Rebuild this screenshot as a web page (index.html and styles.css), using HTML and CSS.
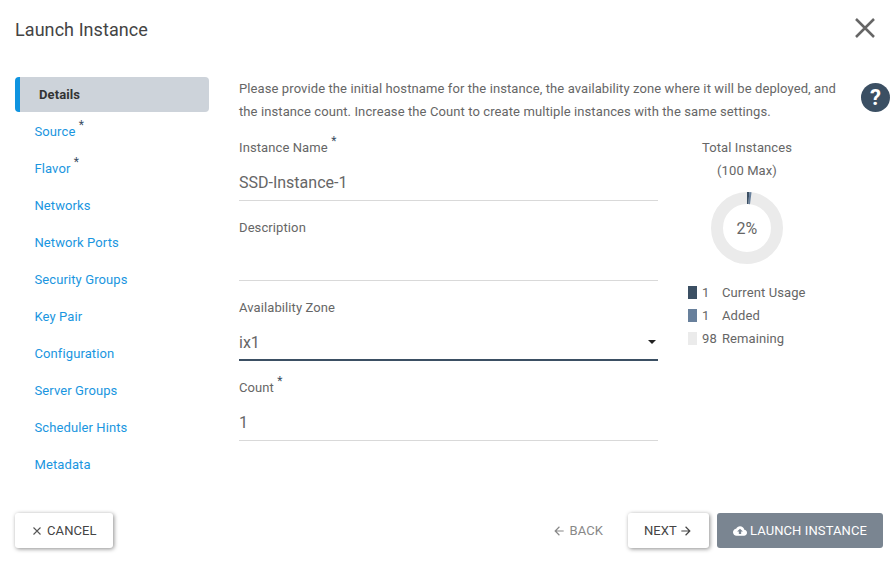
FILE: index.html
```html
<!DOCTYPE html>
<html lang="en">
<head>
  <meta charset="UTF-8" />
  <title>Launch Instance</title>
  <link rel="stylesheet" href="styles.css">
</head>
<body>
  <div class="dialog">
    <header class="dialog-header">
      <h1>Launch Instance</h1>
      <button class="close" aria-label="Close">
        <svg width="20" height="20" viewBox="0 0 20 20"><path d="M1 1L19 19M19 1L1 19" stroke="#666" stroke-width="2.5" fill="none"/></svg>
      </button>
    </header>

    <div class="dialog-body">
      <nav class="steps">
        <a class="step active">Details</a>
        <a class="step">Source <sup class="req">*</sup></a>
        <a class="step">Flavor <sup class="req">*</sup></a>
        <a class="step">Networks</a>
        <a class="step">Network Ports</a>
        <a class="step">Security Groups</a>
        <a class="step">Key Pair</a>
        <a class="step">Configuration</a>
        <a class="step">Server Groups</a>
        <a class="step">Scheduler Hints</a>
        <a class="step">Metadata</a>
      </nav>

      <main class="content">
        <div class="intro-row">
          <p class="intro">Please provide the initial hostname for the instance, the availability zone where it will be deployed, and the instance count. Increase the Count to create multiple instances with the same settings.</p>
          <span class="help">?</span>
        </div>

        <div class="columns">
          <form class="fields">
            <div class="field">
              <label>Instance Name <sup class="req">*</sup></label>
              <div class="value">SSD-Instance-1</div>
            </div>
            <div class="field">
              <label>Description</label>
              <div class="value"></div>
            </div>
            <div class="field">
              <label>Availability Zone</label>
              <div class="value select">ix1<span class="caret"></span></div>
            </div>
            <div class="field">
              <label>Count <sup class="req">*</sup></label>
              <div class="value">1</div>
            </div>
          </form>

          <aside class="usage">
            <div class="usage-title">Total Instances</div>
            <div class="usage-title">(100 Max)</div>
            <div class="donut">
              <svg width="72" height="72" viewBox="0 0 72 72">
                <circle cx="36" cy="36" r="30" fill="none" stroke="#ebebeb" stroke-width="12"/>
                <path d="M36 6A30 30 0 0 1 37.88 6.06" fill="none" stroke="#3b4f63" stroke-width="12"/>
                <path d="M37.88 6.06A30 30 0 0 1 39.76 6.24" fill="none" stroke="#68809c" stroke-width="12"/>
              </svg>
              <span class="donut-label">2%</span>
            </div>
            <ul class="legend">
              <li><i class="swatch current"></i><span class="num">1</span>Current Usage</li>
              <li><i class="swatch added"></i><span class="num">1</span>Added</li>
              <li><i class="swatch remaining"></i><span class="num">98</span>Remaining</li>
            </ul>
          </aside>
        </div>
      </main>
    </div>

    <footer class="dialog-footer">
      <button class="btn raised cancel">
        <svg width="8" height="8" viewBox="0 0 8 8"><path d="M0.5 0.5L7.5 7.5M7.5 0.5L0.5 7.5" stroke="#555" stroke-width="1.1" fill="none"/></svg>
        CANCEL
      </button>
      <div class="footer-right">
        <button class="btn flat">
          <svg width="14" height="14" viewBox="0 0 24 24"><path fill="#888" d="M20 11H7.83l5.59-5.59L12 4l-8 8 8 8 1.41-1.41L7.83 13H20v-2z"/></svg>
          BACK
        </button>
        <button class="btn raised next">
          NEXT
          <svg width="14" height="14" viewBox="0 0 24 24"><path fill="#444" d="M4 11h12.17l-5.59-5.59L12 4l8 8-8 8-1.41-1.41L16.17 13H4v-2z"/></svg>
        </button>
        <button class="btn primary">
          <svg width="14" height="14" viewBox="0 0 24 24"><path fill="#fff" d="M19.35 10.04C18.67 6.59 15.64 4 12 4 9.11 4 6.6 5.64 5.35 8.04 2.34 8.36 0 10.91 0 14c0 3.31 2.69 6 6 6h13c2.76 0 5-2.24 5-5 0-2.64-2.05-4.78-4.65-4.96zM14 13v4h-4v-4H7l5-5 5 5h-3z"/></svg>
          LAUNCH INSTANCE
        </button>
      </div>
    </footer>
  </div>
</body>
</html>
```

FILE: styles.css
```css
* {
  box-sizing: border-box;
}

body {
  margin: 0;
  background: #fff;
  font-family: Roboto, "Liberation Sans", sans-serif;
  font-size: 13px;
  letter-spacing: 0.1px;
  color: #666;
}

.dialog {
  width: 895px;
  height: 563px;
  display: flex;
  flex-direction: column;
  overflow: hidden;
}

.dialog-header {
  height: 77px;
  padding: 18px 20px 0 15px;
  display: flex;
  justify-content: space-between;
  align-items: flex-start;
}

.dialog-header h1 {
  margin: 0;
  font-size: 18px;
  line-height: 23px;
  font-weight: 400;
  letter-spacing: 0.07px;
  color: #444;
}

.close {
  padding: 0;
  border: 0;
  background: none;
  height: 20px;
}

.dialog-body {
  display: flex;
  flex: 1;
  padding-left: 15px;
}

.steps {
  width: 194px;
  display: flex;
  flex-direction: column;
  gap: 2px;
}

.step {
  height: 35px;
  padding-left: 19.5px;
  line-height: 35px;
  color: #1a96e0;
}

.step.active {
  padding-left: 19px;
  border-left: 5px solid #0f94e0;
  border-radius: 4px;
  background: #cdd3da;
  font-weight: 700;
  color: #333;
}

.req {
  position: relative;
  top: -7px;
  font-size: 12px;
  line-height: 0;
  vertical-align: baseline;
  color: #3b4f63;
}

.content {
  flex: 1;
  padding-left: 30px;
}

.intro-row {
  display: flex;
  height: 61px;
}

.intro {
  width: 606px;
  margin: 0;
  line-height: 23px;
}

.help {
  width: 29px;
  height: 29px;
  margin: 6px 0 0 16px;
  border-radius: 50%;
  background: #3b4f63;
  color: #fff;
  font-size: 22px;
  font-weight: 700;
  line-height: 29px;
  text-align: center;
}

.columns {
  display: flex;
}

.fields {
  width: 419px;
}

.field {
  height: 80px;
}

.field label {
  display: block;
  height: 28px;
  line-height: 20px;
}

.value {
  position: relative;
  height: 35px;
  border-bottom: 1px solid #d9d9d9;
  font-size: 16px;
  line-height: 34px;
  letter-spacing: 0;
}

.value.select {
  border-bottom: 2px solid #3b4f63;
}

.caret {
  position: absolute;
  right: 2px;
  top: 14px;
  border-top: 4px solid #222;
  border-left: 4px solid transparent;
  border-right: 4px solid transparent;
}

.usage {
  width: 118px;
  margin-left: 30px;
}

.usage-title {
  height: 23px;
  line-height: 20px;
  text-align: center;
}

.donut {
  position: relative;
  width: 72px;
  height: 72px;
  margin: 8px auto 0;
}

.donut svg {
  display: block;
}

.donut-label {
  position: absolute;
  inset: 0;
  font-size: 16px;
  line-height: 74px;
  text-align: center;
}

.legend {
  margin: 17px 0 0;
  padding: 0;
  list-style: none;
}

.legend li {
  display: flex;
  align-items: center;
  height: 23px;
  white-space: nowrap;
}

.swatch {
  width: 9px;
  height: 13px;
  margin-right: 5px;
}

.swatch.current {
  background: #3b4f63;
}

.swatch.added {
  background: #68809c;
}

.swatch.remaining {
  background: #ebebeb;
}

.num {
  flex: none;
  width: 20px;
}

.dialog-footer {
  height: 50px;
  padding: 0 12px 0 15px;
  display: flex;
  justify-content: space-between;
  align-items: flex-start;
}

.footer-right {
  display: flex;
  gap: 8px;
}

.btn {
  height: 35px;
  padding: 0 16px;
  border: 0;
  border-radius: 3px;
  display: flex;
  align-items: center;
  gap: 3px;
  font-family: inherit;
  font-size: 13px;
  letter-spacing: 0.1px;
  background: #fff;
  color: #444;
}

.btn.cancel {
  padding: 0 16px 0 18px;
  gap: 6px;
}

.btn.next {
  gap: 2px;
}

.btn.raised {
  box-shadow: 1px 1px 4px rgba(0, 0, 0, 0.45);
}

.btn.flat {
  margin-right: 1px;
  color: #888;
}

.btn.primary {
  background: #7a8591;
  color: #fff;
}
```
